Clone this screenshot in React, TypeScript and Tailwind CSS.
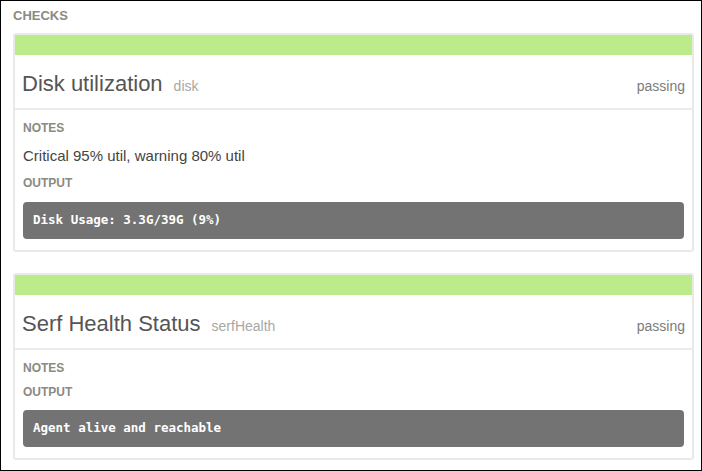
import React from 'react';

interface Check {
  id: string;
  name: string;
  checkId: string;
  status: string;
  notes?: string;
  output: string;
}

const checks: Check[] = [
  {
    id: 'disk',
    name: 'Disk utilization',
    checkId: 'disk',
    status: 'passing',
    notes: 'Critical 95% util, warning 80% util',
    output: 'Disk Usage: 3.3G/39G (9%)',
  },
  {
    id: 'serf',
    name: 'Serf Health Status',
    checkId: 'serfHealth',
    status: 'passing',
    output: 'Agent alive and reachable',
  },
];

function CheckCard({ check }: { check: Check }) {
  return (
    <section className="rounded-[3px] border-2 border-[#e9e9e5] bg-white">
      <div className="h-[20px] bg-[#bbeb8a]" />
      <header className="flex h-[55px] items-baseline justify-between border-b-2 border-[#ececE8] pl-[7px] pr-[7px] pt-[15px]">
        <div className="flex items-baseline gap-[11px]">
          <span className="text-[22px] leading-[28px] text-[#555]">{check.name}</span>
          <span className="text-[14px] text-[#a8a8a4]">{check.checkId}</span>
        </div>
        <span className="text-[14px] text-[#7c7c78]">{check.status}</span>
      </header>
      <div className="px-[8px] pb-[11px] pt-[10px]">
        <h4 className="text-[12px] font-bold leading-[16px] text-[#8a8a80]">NOTES</h4>
        {check.notes && (
          <p className="mt-[10px] text-[15px] leading-[20px] text-[#444]">{check.notes}</p>
        )}
        <h4
          className={`text-[12px] font-bold leading-[16px] text-[#8a8a80] ${check.notes ? 'mt-[9px]' : 'mt-[8px]'}`}
        >
          OUTPUT
        </h4>
        <pre
          className={`flex h-[37px] items-center rounded-[4px] bg-[#737373] px-[10px] font-['DejaVu_Sans_Mono',monospace] text-[12.5px] font-bold text-white ${check.notes ? 'mt-[11px]' : 'mt-[10px]'}`}
        >
          {check.output}
        </pre>
      </div>
    </section>
  );
}

export default function App() {
  return (
    <div className="h-[471px] w-[702px] overflow-hidden border border-black bg-white font-['Liberation_Sans',Arial,sans-serif]">
      <div className="pl-[12px] pr-[7px] pt-[6px]">
        <h3 className="text-[13px] font-bold leading-[18px] text-[#8a8a80]">CHECKS</h3>
        <div className="mt-[8px] flex flex-col gap-[21px]">
          {checks.map((c) => (
            <CheckCard key={c.id} check={c} />
          ))}
        </div>
      </div>
    </div>
  );
}
